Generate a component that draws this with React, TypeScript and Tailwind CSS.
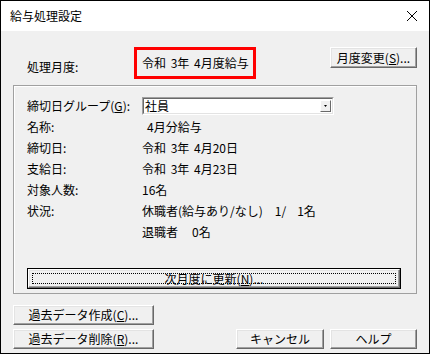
import React from 'react';

const font = { fontFamily: '"Noto Sans CJK JP", "Noto Sans", sans-serif' };

function Btn({ children, className = '' }: { children: React.ReactNode; className?: string }) {
  return (
    <div
      className={`flex items-center justify-center border border-t-white border-l-white border-r-[#696969] border-b-[#696969] bg-[#f0f0f0] text-[12px] leading-none text-black shadow-[inset_-1px_-1px_0_#a0a0a0,inset_1px_1px_0_#e3e3e3] ${className}`}
    >
      {children}
    </div>
  );
}

function Row({ label, children }: { label: React.ReactNode; children?: React.ReactNode }) {
  return (
    <div className="flex h-[21px] items-center">
      <div className="w-[115px] shrink-0">{label}</div>
      <div className="whitespace-pre [word-spacing:2px]">{children}</div>
    </div>
  );
}

export default function App() {
  return (
    <div
      style={font}
      className="flex h-[354px] w-[430px] flex-col border border-black bg-[#f0f0f0] text-[12px] leading-none text-black"
    >
      {/* title bar */}
      <div className="flex h-[30px] shrink-0 items-center justify-between bg-white pl-[9px] pr-[10px]">
        <span className="text-[12px]">給与処理設定</span>
        <svg width="12" height="12" viewBox="0 0 12 12" className="mr-[1px]">
          <path d="M1 1L11 11M11 1L1 11" stroke="#000" strokeWidth="1" />
        </svg>
      </div>

      <div className="flex flex-1 flex-col px-[12px]">
        {/* header */}
        <div className="mt-[16px] flex h-[35px] items-start">
          <div className="mt-[14px] w-[121px] pl-[14px]">処理月度:</div>
          <div className="flex h-[32px] w-[122px] items-center border-[3px] border-[#ff0000] pl-[5px] [word-spacing:2px]">
            令和 3年 4月度給与
          </div>
          <div className="flex-1" />
          <Btn className="h-[21px] w-[87px]">
            月度変更(<span className="underline">S</span>)...
          </Btn>
        </div>

        {/* group box */}
        <div className="mt-[3px] flex h-[209px] flex-col border border-[#a0a0a0] pl-[13px] pt-[9px] shadow-[inset_1px_1px_0_#fff]">
          <Row
            label={
              <>
                締切日グループ(<span className="underline">G</span>):
              </>
            }
          >
            <div className="flex h-[18px] w-[192px] items-center border border-t-[#a0a0a0] border-l-[#a0a0a0] border-r-white border-b-white [word-spacing:0]">
              <div className="flex h-full flex-1 items-center border border-t-[#696969] border-l-[#696969] border-r-[#e3e3e3] border-b-[#e3e3e3] bg-white">
                <span className="flex-1 pl-[1px]">社員</span>
                <div className="mr-[1px] flex h-[12px] w-[11px] items-center justify-center border border-t-white border-l-white border-r-[#696969] border-b-[#696969] bg-[#f0f0f0]">
                  <svg width="3" height="2" viewBox="0 0 3 2">
                    <path d="M0 0H3L1.5 2Z" fill="#000" />
                  </svg>
                </div>
              </div>
            </div>
          </Row>
          <Row label="名称:">
            <span className="pl-[5px]">4月分給与</span>
          </Row>
          <Row label="締切日:">令和 3年 4月20日</Row>
          <Row label="支給日:">令和 3年 4月23日</Row>
          <Row label="対象人数:">16名</Row>
          <Row label="状況:">
            休職者(給与あり/なし)<span className="ml-[12px]">1/</span>
            <span className="ml-[11px]">1名</span>
          </Row>
          <Row label="">
            退職者<span className="ml-[14px]">0名</span>
          </Row>

          <div className="mb-[4px] mr-[15px] mt-auto flex h-[21px] border border-black">
            <Btn className="relative h-full flex-1">
              <span className="pointer-events-none absolute inset-[3px] border border-dotted border-black" />
              次月度に更新(<span className="underline">N</span>)...
            </Btn>
          </div>
        </div>

        {/* bottom buttons */}
        <div className="mt-[11px] flex flex-col gap-[4px]">
          <Btn className="h-[20px] w-[141px]">
            過去データ作成(<span className="underline">C</span>)...
          </Btn>
          <div className="flex items-center">
            <Btn className="h-[20px] w-[141px]">
              過去データ削除(<span className="underline">R</span>)...
            </Btn>
            <div className="flex-1" />
            <Btn className="h-[20px] w-[88px]">キャンセル</Btn>
            <Btn className="ml-[6px] h-[20px] w-[87px]">ヘルプ</Btn>
          </div>
        </div>
      </div>
    </div>
  );
}
